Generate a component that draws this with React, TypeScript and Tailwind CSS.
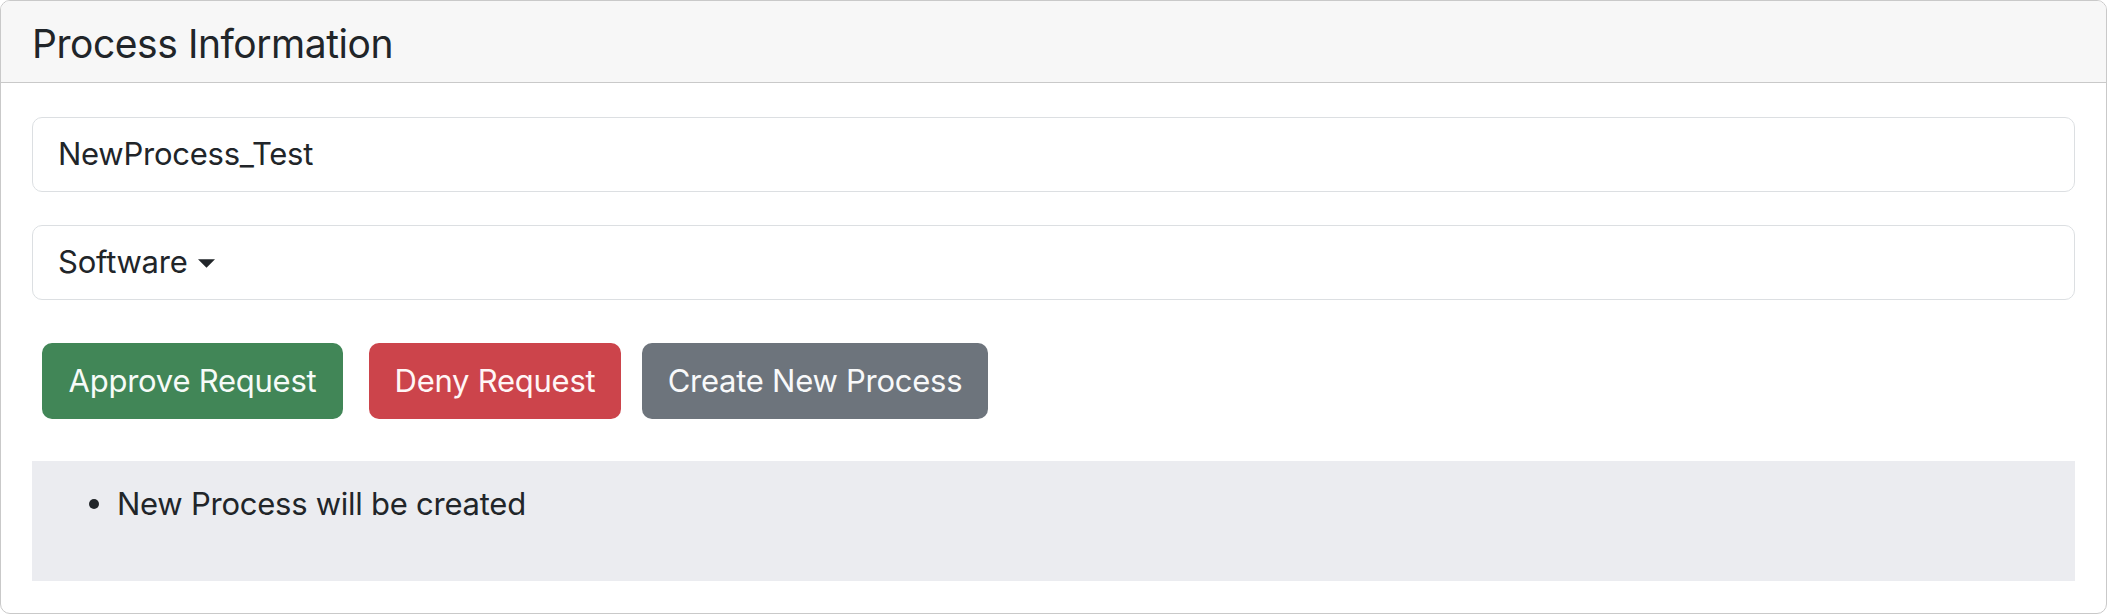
import React from "react";

const font = { fontFamily: "Inter, 'Noto Sans', sans-serif" };

function Field({ children }: { children: React.ReactNode }) {
  return (
    <div className="flex h-[75px] items-center rounded-[10px] border border-[#dcdfe2] bg-white px-[25px] text-[31px] tracking-[-0.25px] text-[#212529]">
      {children}
    </div>
  );
}

export default function App() {
  return (
    <div style={font} className="w-[2107px] bg-white">
      <div className="h-[614px] overflow-hidden rounded-[10px] border border-[#c9c9c9]">
        <div className="flex h-[82px] items-center border-b border-[#c9c9c9] bg-[#f7f7f7] px-[31px] pt-[3px]">
          <h1 className="text-[39px] leading-none tracking-[-0.45px] text-[#212529]">Process Information</h1>
        </div>

        <div className="px-[31px] pt-[34px]">
          <Field>NewProcess_Test</Field>

          <div className="mt-[33px]">
            <Field>
              <span>Software</span>
              <svg width="17" height="9" viewBox="0 0 16 8" className="ml-[10px] mt-[2px]">
                <path d="M0 0 H16 L8 8 Z" fill="#212529" />
              </svg>
            </Field>
          </div>

          <div className="mt-[43px] flex pl-[10px] text-[31px] tracking-[-0.25px]">
            <button className="h-[76px] w-[301px] rounded-[10px] bg-[#418657] text-[#f6fbf8]">
              Approve Request
            </button>
            <button className="ml-[26px] h-[76px] w-[252px] rounded-[10px] bg-[#cc444b] text-[#fff6f6]">
              Deny Request
            </button>
            <button className="ml-[21px] h-[76px] w-[346px] rounded-[10px] bg-[#6d747c] text-[#f8f9fa]">
              Create New Process
            </button>
          </div>

          <div className="mt-[42px] h-[120px] bg-[#ebecf0] pt-[19px]">
            <div className="flex items-center text-[31px] leading-[48px] tracking-[-0.25px] text-[#212529]">
              <span className="ml-[57px] h-[10px] w-[10px] rounded-full bg-[#212529]" />
              <span className="ml-[18px]">New Process will be created</span>
            </div>
          </div>
        </div>
      </div>
    </div>
  );
}
